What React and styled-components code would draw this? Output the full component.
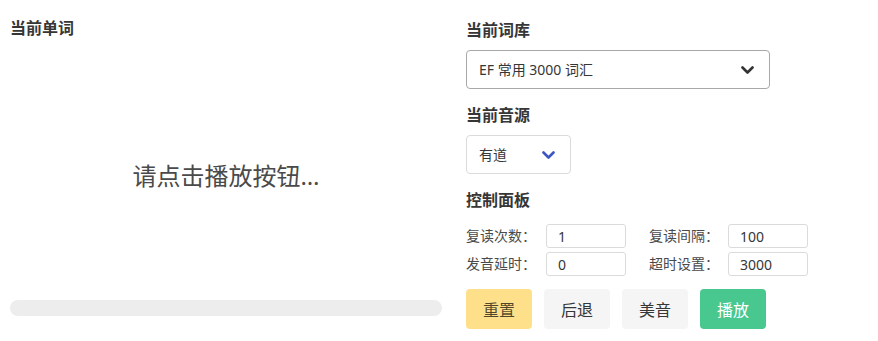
import React from 'react'
import styled, { createGlobalStyle } from 'styled-components'

const GlobalStyle = createGlobalStyle`
  html, body {
    margin: 0;
    padding: 0;
    background: #fff;
  }
  body {
    font-family: "Noto Sans", "Noto Sans CJK SC", sans-serif;
    color: #4a4a4a;
  }
`

const Page = styled.div`
  display: grid;
  grid-template-columns: 432px auto;
  justify-content: start;
  column-gap: 24px;
  padding: 18px 0 0 10px;
`

const Column = styled.div`
  display: flex;
  flex-direction: column;
`

const LeftColumn = styled(Column)`
  height: 298px;
`

const Title = styled.h3`
  color: #363636;
  font-size: 16px;
  font-weight: 700;
  line-height: ${props => props.lh || 24}px;
  margin: ${props => props.mt || 0}px 0 0;
`

const Message = styled.div`
  flex: 1;
  display: flex;
  align-items: center;
  justify-content: center;
  padding-top: 14px;
  font-size: 24px;
  line-height: 32px;
  color: #4a4a4a;
`

const Progress = styled.div`
  height: 16px;
  border-radius: 8px;
  background: #ededed;
`

const SelectWrap = styled.div`
  position: relative;
  width: ${props => props.width}px;
  margin-top: 8px;

  > svg {
    position: absolute;
    top: 16px;
    right: ${props => props.arrowRight}px;
    pointer-events: none;
  }
`

const Select = styled.select`
  appearance: none;
  width: 100%;
  height: 39px;
  box-sizing: border-box;
  border: 1px solid ${props => props.borderColor};
  border-radius: 4px;
  background: #fff;
  padding: 0 12px;
  font-family: inherit;
  font-size: 14px;
  color: #363636;
  outline: none;
`

const Fields = styled.div`
  display: grid;
  grid-template-columns: auto 80px auto 80px;
  row-gap: 4px;
  margin-top: 12px;
  align-items: center;
  justify-content: start;
`

const Label = styled.label`
  font-size: 14px;
  line-height: 24px;
  white-space: nowrap;
  color: #4a4a4a;
  margin-right: ${props => props.mr}px;
  margin-left: ${props => props.ml || 0}px;
`

const Input = styled.input`
  width: 80px;
  height: 24px;
  box-sizing: border-box;
  border: 1px solid #dbdbdb;
  border-radius: 3px;
  padding: 0 11px;
  font-family: inherit;
  font-size: 14px;
  color: #363636;
  outline: none;
`

const Buttons = styled.div`
  display: flex;
  gap: 12px;
  margin-top: 13px;
`

const palette = {
  warning: { bg: '#ffe08a', fg: 'rgba(0, 0, 0, 0.7)' },
  light: { bg: '#f5f5f5', fg: '#363636' },
  success: { bg: '#48c78e', fg: '#fff' },
}

const Button = styled.button`
  height: 40px;
  padding: 0 17px;
  border: none;
  border-radius: 4px;
  font-family: inherit;
  font-size: 16px;
  background: ${props => palette[props.kind].bg};
  color: ${props => palette[props.kind].fg};
  cursor: pointer;
`

const Chevron = ({ color }) => (
  <svg width="13" height="9" viewBox="0 0 13 9">
    <polyline points="1.5,1.5 6.5,6.5 11.5,1.5" fill="none" stroke={color} strokeWidth="2.6" strokeLinecap="round" strokeLinejoin="round" />
  </svg>
)

const App = () => {
  return (
    <>
      <GlobalStyle />
      <Page>
        <LeftColumn>
          <Title lh={20}>当前单词</Title>
          <Message>请点击播放按钮…</Message>
          <Progress />
        </LeftColumn>
        <Column>
          <Title>当前词库</Title>
          <SelectWrap width={304} arrowRight={16}>
            <Select borderColor="#a8a8a8" defaultValue="ef3000">
              <option value="ef3000">EF 常用 3000 词汇</option>
            </Select>
            <Chevron color="#333" />
          </SelectWrap>
          <Title mt={14}>当前音源</Title>
          <SelectWrap width={105} arrowRight={16}>
            <Select borderColor="#dbdbdb" defaultValue="youdao">
              <option value="youdao">有道</option>
            </Select>
            <Chevron color="#3e56c4" />
          </SelectWrap>
          <Title mt={14}>控制面板</Title>
          <Fields>
            <Label mr={10}>复读次数：</Label>
            <Input defaultValue="1" />
            <Label ml={23} mr={9}>复读间隔：</Label>
            <Input defaultValue="100" />
            <Label mr={10}>发音延时：</Label>
            <Input defaultValue="0" />
            <Label ml={23} mr={9}>超时设置：</Label>
            <Input defaultValue="3000" />
          </Fields>
          <Buttons>
            <Button kind="warning">重置</Button>
            <Button kind="light">后退</Button>
            <Button kind="light">美音</Button>
            <Button kind="success">播放</Button>
          </Buttons>
        </Column>
      </Page>
    </>
  )
}

export default App
